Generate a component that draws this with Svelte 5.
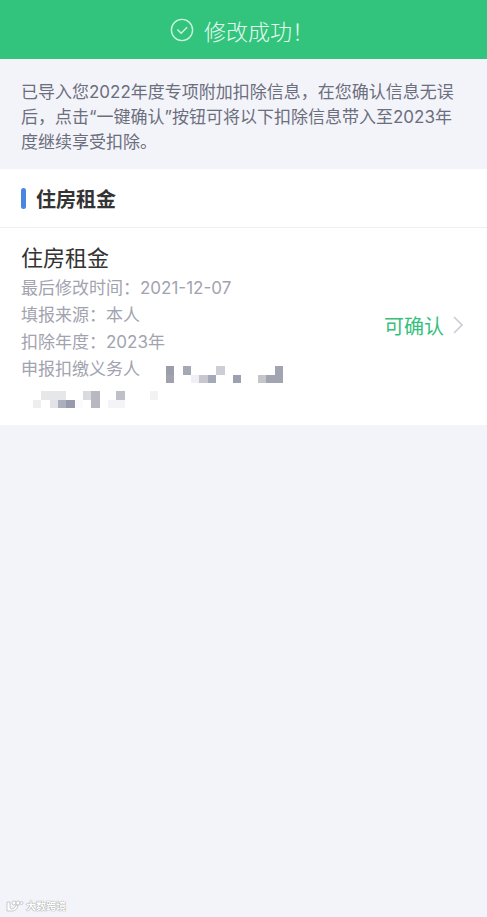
<script>
  const year = 2023;

  const item = {
    title: '住房租金',
    status: '可确认',
    rows: [
      { label: '最后修改时间', value: '2021-12-07' },
      { label: '填报来源', value: '本人' },
      { label: '扣除年度', value: `${year}年` },
    ],
  };

  // masked company name: [column, row, width, height, colour]
  const maskTop = [
    [0, 0, 1, 1, '#9a9dac'],
    [0, 1, 1, 1, '#a2a2ae'],
    [2, 0, 1, 1, '#a5a9b5'],
    [3, 1, 1, 1, '#efeff4'],
    [4, 1, 1, 1, '#c6c6cf'],
    [5, 1, 1, 1, '#a5a8b6'],
    [6, 0, 1, 1, '#cdced5'],
    [8, 1, 1, 1, '#9da0ae'],
    [11, 1, 1, 1, '#c5c5cc'],
    [12, 1, 2, 1, '#a2a4b1'],
    [13, 0, 1, 1, '#a2a4b1'],
  ];

  const maskBottom = [
    [0, 1, 1, 1, '#eeeef1'],
    [1, 0, 3, 1, '#e6e7e9'],
    [2, 1, 1, 1, '#e2e3e6'],
    [3, 1, 1, 1, '#acafbd'],
    [4, 1, 1, 1, '#979aaa'],
    [5, 1, 1, 1, '#fbfbfd'],
    [6, 0, 1, 1, '#dadbde'],
    [7, 0, 1, 2, '#b8b8c0'],
    [9, 1, 2, 1, '#f4f4f8'],
    [10, 0, 1, 1, '#bfbfc9'],
    [14, 0, 1, 1, '#f2f2f4'],
  ];
</script>

<div class="page">
  <header class="toast">
    <svg class="toast-icon" viewBox="0 0 24 24" aria-hidden="true">
      <circle cx="12" cy="12" r="10.6" />
      <path d="M7.4 11.6l3.7 3.7 6-6" />
    </svg>
    <span>修改成功！</span>
  </header>

  <p class="notice">
    已导入您2022年度专项附加扣除信息，在您确认信息无误后，点击“一键确认”按钮可将以下扣除信息带入至{year}年度继续享受扣除。
  </p>

  <main class="section">
    <h2 class="section-title">住房租金</h2>

    <a class="item" href="#detail">
      <div class="info">
        <h3>{item.title}</h3>
        {#each item.rows as row}
          <div class="row">{row.label}：{row.value}</div>
        {/each}
        <div class="row masked">
          <span>申报扣缴义务人</span>
          <svg class="mask-top" viewBox="0 0 14 2" shape-rendering="crispEdges" aria-hidden="true">
            {#each maskTop as [x, y, w, h, color]}
              <rect {x} {y} width={w} height={h} fill={color} />
            {/each}
          </svg>
        </div>
        <svg class="mask-bottom" viewBox="0 0 15 2" shape-rendering="crispEdges" aria-hidden="true">
          {#each maskBottom as [x, y, w, h, color]}
            <rect {x} {y} width={w} height={h} fill={color} />
          {/each}
        </svg>
      </div>
      <span class="status">{item.status}</span>
      <svg class="arrow" viewBox="0 0 10 18" aria-hidden="true">
        <path d="M1 1l8 8-8 8" />
      </svg>
    </a>
  </main>

  <footer class="watermark">
    <svg viewBox="0 0 18 12" aria-hidden="true">
      <path d="M1 2h3v5q0 2 2 2t3-2l1-2h2q-1 6-6 6H1z" />
      <circle cx="8" cy="3" r="2" />
      <circle cx="12" cy="3" r="2" />
      <circle cx="15.5" cy="3" r="1.5" />
    </svg>
    <span>大数跨境</span>
  </footer>
</div>

<style>
  :global(body) {
    margin: 0;
    background: #f3f4f9;
    font-family: Inter, 'Noto Sans CJK SC', sans-serif;
  }

  .page {
    display: flex;
    flex-direction: column;
    min-height: 100vh;
  }

  .toast {
    display: flex;
    align-items: center;
    justify-content: center;
    gap: 10px;
    height: 59px;
    padding-right: 3px;
    box-sizing: border-box;
    background: #32c47c;
    color: #e6fbf0;
    font-family: 'Noto Sans CJK SC', sans-serif;
    font-size: 22px;
    font-weight: 300;
  }

  .toast-icon {
    width: 24px;
    height: 24px;
    fill: none;
    stroke: #c9f5df;
    stroke-width: 1.4;
  }

  .notice {
    margin: 0;
    padding: 21px 24px 14px 21px;
    color: #6b6e7d;
    font-size: 17px;
    line-height: 25px;
  }

  .section {
    background: #fff;
  }

  .section-title {
    display: flex;
    align-items: center;
    gap: 10px;
    height: 58px;
    margin: 0;
    padding: 0 21px;
    color: #333;
    font-size: 20px;
    font-weight: 700;
  }

  .section-title::before {
    content: '';
    width: 5px;
    height: 21px;
    border-radius: 3px;
    background: #4a86e0;
  }

  .item {
    display: flex;
    align-items: center;
    padding: 14px 24px 17px 21px;
    border-top: 1px solid #efeff3;
    color: inherit;
    text-decoration: none;
  }

  .info {
    flex: 1;
  }

  h3 {
    margin: 0;
    color: #333;
    font-size: 22px;
    font-weight: 400;
    line-height: 33px;
  }

  .row {
    color: #a2a3af;
    font-size: 17px;
    line-height: 27px;
  }

  .masked {
    display: flex;
    align-items: flex-end;
    gap: 26px;
  }

  .mask-top {
    width: 117px;
    height: 17px;
  }

  .mask-bottom {
    display: block;
    width: 125px;
    height: 17px;
    margin: 8px 0 0 12px;
  }

  .status {
    color: #35c07c;
    font-size: 20px;
  }

  .arrow {
    width: 10px;
    height: 18px;
    margin-left: 9px;
    fill: none;
    stroke: #cccdd3;
    stroke-width: 1.6;
  }

  .watermark {
    display: flex;
    align-items: center;
    gap: 2px;
    margin-top: auto;
    padding: 0 6px 4px;
    color: #fff;
    font-family: 'Noto Sans CJK SC', sans-serif;
    font-size: 10px;
    font-weight: 700;
    line-height: 14px;
    text-shadow: 0 0 1px #888, 0 0 1px #999;
  }

  .watermark svg {
    width: 18px;
    height: 12px;
    fill: #fff;
    stroke: #b4b5b9;
    stroke-width: 0.7;
  }
</style>
